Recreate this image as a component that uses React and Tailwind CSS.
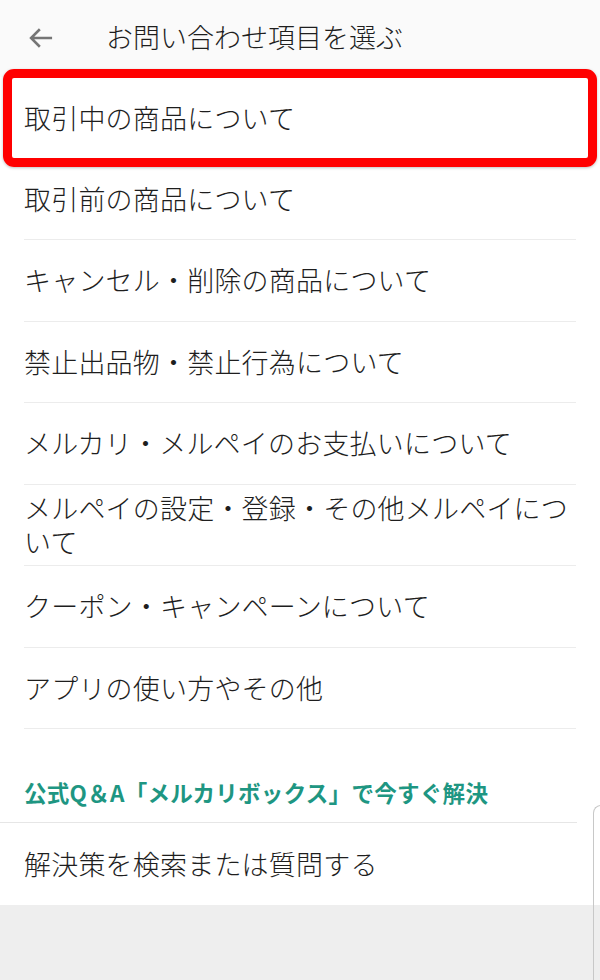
const items = [
  '取引前の商品について',
  'キャンセル・削除の商品について',
  '禁止出品物・禁止行為について',
  'メルカリ・メルペイのお支払いについて',
  'メルペイの設定・登録・その他メルペイについて',
  'クーポン・キャンペーンについて',
  'アプリの使い方やその他',
];

const font = { fontFamily: '"Noto Sans CJK JP", "Noto Sans", sans-serif' };

const Row = ({ label, divider = true }) => (
  <div className={`mx-6 h-[81.5px] flex items-center ${divider ? 'border-b border-[#ececec]' : ''}`}>
    <span className="text-[27px] leading-[34px] font-light text-[#1e1e1e] tracking-[0.2px]">{label}</span>
  </div>
);

export default function App() {
  return (
    <div className="relative w-[600px] h-[980px] overflow-hidden bg-[#eeeeee]" style={font}>
      <header className="h-[77px] bg-[#fafafa] flex items-center">
        <svg className="ml-[27px] mt-[-2px]" width="28" height="28" viewBox="0 0 24 24" fill="none" stroke="#757575" strokeWidth="2.2">
          <path d="M21.5 12H3.5M11 4.5 3.5 12l7.5 7.5" />
        </svg>
        <h1 className="ml-[51px] text-[27px] font-light text-[#1e1e1e] mt-[-2px]">お問い合わせ項目を選ぶ</h1>
      </header>

      <div className="bg-white">
        <Row label="取引中の商品について" divider={false} />
        {items.map((t) => (
          <Row key={t} label={t} />
        ))}
        <div className="h-[93px] px-6 flex items-end pb-[12px]">
          <span className="text-[22.5px] font-bold text-[#1e9682] tracking-[0.3px]">
            公式Q＆A「メルカリボックス」で今すぐ解決
          </span>
        </div>
        <div className="mr-[23px] border-t border-[#e6e6e6]" />
        <Row label="解決策を検索または質問する" divider={false} />
      </div>

      <div className="absolute left-[3px] top-[69px] w-[594px] h-[98px] rounded-[11px] border-[9px] border-[#ff0000] shadow-[0_1px_3px_rgba(0,0,0,0.25)]" />
      <div className="absolute left-[593px] top-[805px] w-[10px] h-[200px] rounded-tl-[8px] border-l border-t border-[#c8c8c8]" />
    </div>
  );
}
